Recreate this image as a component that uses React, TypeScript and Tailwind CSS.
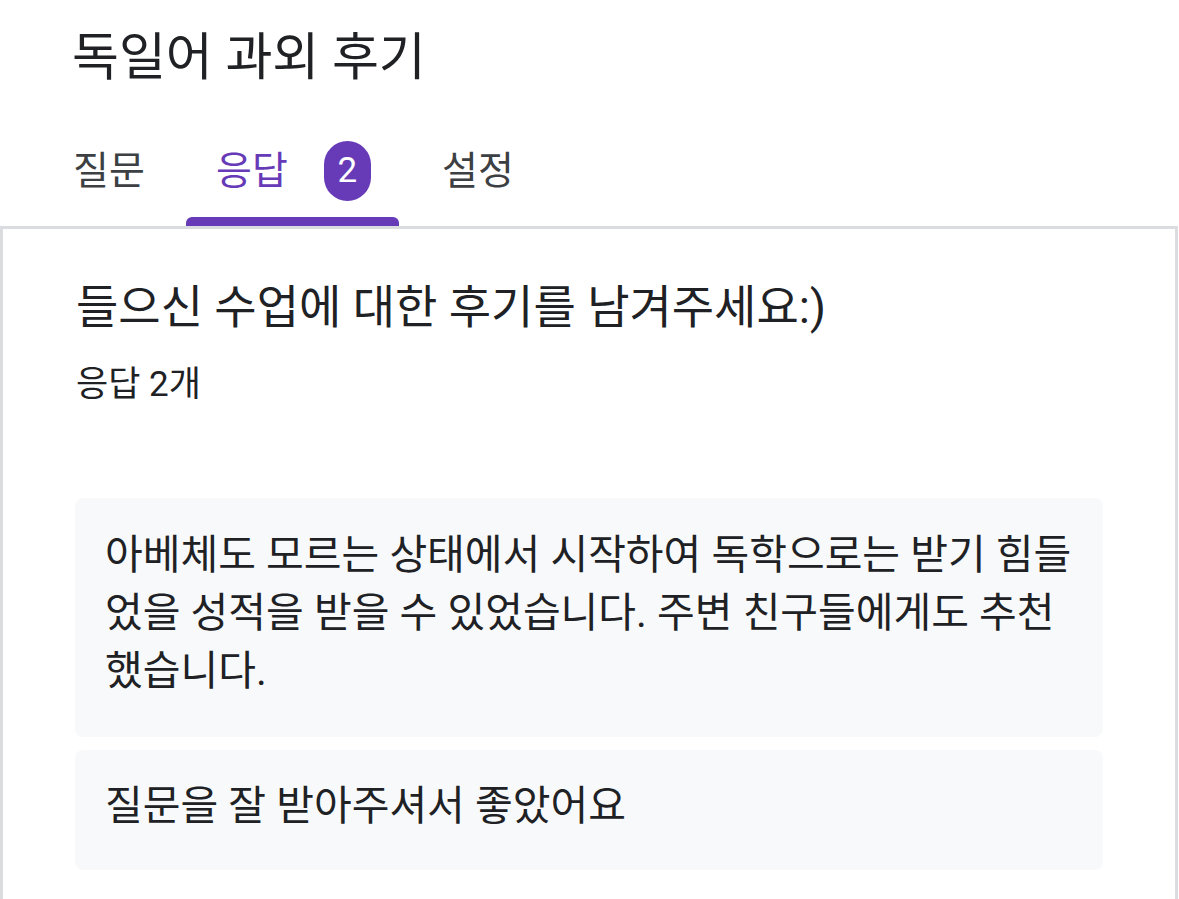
import React from "react";

const font = { fontFamily: 'Roboto, "Noto Sans CJK KR", sans-serif' };

export default function App() {
  return (
    <div className="w-[1179px] h-[899px] overflow-hidden bg-white" style={font}>
      <div className="pl-[72px] pt-[26px] h-[110px]">
        <h1 className="text-[51px] leading-[64px] text-[#202124] font-normal">독일어 과외 후기</h1>
      </div>
      <div className="flex h-[116px]">
        <div className="w-[186px] pl-[73px] flex flex-col">
          <div className="flex-1 flex items-center pt-[15px]">
            <span className="text-[39px] leading-[50px] text-[#3c4043]">질문</span>
          </div>
          <div className="h-[9px]" />
        </div>
        <div className="w-[213px] flex flex-col">
          <div className="flex-1 flex items-center pl-[30px] gap-[36px] pt-[15px]">
            <span className="text-[39px] leading-[50px] text-[#673ab7]">응답</span>
            <span className="w-[47px] h-[60px] rounded-full bg-[#673ab7] text-white text-[35px] flex items-center justify-center">2</span>
          </div>
          <div className="h-[9px] bg-[#673ab7] rounded-t-[6px]" />
        </div>
        <div className="pl-[43px] flex flex-col">
          <div className="flex-1 flex items-center pt-[15px]">
            <span className="text-[39px] leading-[50px] text-[#3c4043]">설정</span>
          </div>
          <div className="h-[9px]" />
        </div>
      </div>
      <div className="w-[1178px] border-[3px] border-[#dadce0] border-b-0 h-[700px] pt-[48px]">
        <div className="pl-[73px]">
          <div className="text-[46px] leading-[60px] text-[#202124]">들으신 수업에 대한 후기를 남겨주세요:)</div>
          <div className="text-[35px] leading-[44px] text-[#202124] mt-[26px]">응답 2개</div>
        </div>
        <div className="pl-[72px] pr-[72px] mt-[91px] flex flex-col gap-[13px]">
          <div className="bg-[#f8f9fa] rounded-[8px] pl-[30px] pr-[17px] pt-[28px] pb-[37px] text-[41px] leading-[58px] text-[#202124] break-all">
            아베체도 모르는 상태에서 시작하여 독학으로는 받기 힘들었을 성적을 받을 수 있었습니다. 주변 친구들에게도 추천했습니다.
          </div>
          <div className="bg-[#f8f9fa] rounded-[8px] pl-[30px] pr-[17px] pt-[27px] pb-[35px] text-[41px] leading-[58px] text-[#202124] break-all">
            질문을 잘 받아주셔서 좋았어요
          </div>
        </div>
      </div>
    </div>
  );
}
